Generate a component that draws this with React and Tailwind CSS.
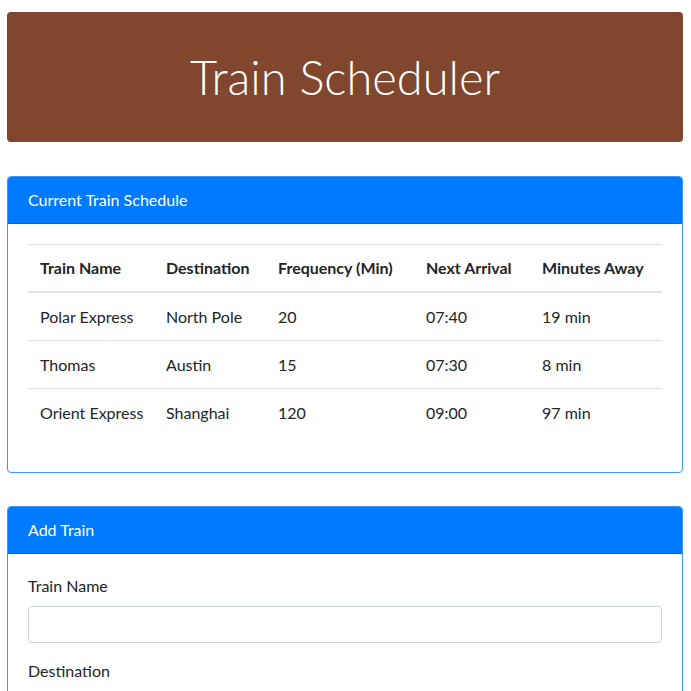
import React from "react";

const trains = [
  { name: "Polar Express", dest: "North Pole", freq: "20", next: "07:40", away: "19 min" },
  { name: "Thomas", dest: "Austin", freq: "15", next: "07:30", away: "8 min" },
  { name: "Orient Express", dest: "Shanghai", freq: "120", next: "09:00", away: "97 min" },
];

const Card = ({ title, children }) => (
  <div className="rounded-[4px] border border-[#3d95ff] bg-white overflow-hidden">
    <div className="bg-[#007bff] text-white px-5 py-3 leading-[22px] border-b border-[#0069d9]">{title}</div>
    <div className="p-5">{children}</div>
  </div>
);

const Field = ({ label }) => (
  <div className="mb-4">
    <label className="block mb-2 leading-6">{label}</label>
    <input
      type="text"
      className="block w-full h-[37px] rounded-[4px] border border-[#ced4da] bg-white px-3 outline-none"
    />
  </div>
);

export default function App() {
  return (
    <div
      className="bg-white text-[#212529] text-[16px] pt-3 pl-[7px] pr-[8px] min-h-screen"
      style={{ fontFamily: 'Lato, "Open Sans", Arial, sans-serif' }}
    >
      <div className="bg-[#80472e] rounded-[4px] py-8 mb-[34px] text-center">
        <h1 className="text-white text-[47px] font-light leading-[66px]">Train Scheduler</h1>
      </div>

      <div className="mb-[33px]">
        <Card title="Current Train Schedule">
          <table className="w-full table-fixed border-collapse mb-4 text-left whitespace-nowrap">
            <thead>
              <tr className="border-t border-[#dee2e6] border-b-2 border-b-[#dee2e6]">
                <th className="w-[126px] px-3 py-3 leading-[22px] font-bold">Train Name</th>
                <th className="w-[112px] px-3 py-3 leading-[22px] font-bold">Destination</th>
                <th className="w-[148px] px-3 py-3 leading-[22px] font-bold">Frequency (Min)</th>
                <th className="w-[116px] px-3 py-3 leading-[22px] font-bold">Next Arrival</th>
                <th className="px-3 py-3 leading-[22px] font-bold">Minutes Away</th>
              </tr>
            </thead>
            <tbody>
              {trains.map((t, i) => (
                <tr key={t.name} className={i > 0 ? "border-t border-[#dee2e6]" : ""}>
                  <td className="px-3 py-3 leading-[23px]">{t.name}</td>
                  <td className="px-3 py-3 leading-[23px]">{t.dest}</td>
                  <td className="px-3 py-3 leading-[23px]">{t.freq}</td>
                  <td className="px-3 py-3 leading-[23px]">{t.next}</td>
                  <td className="px-3 py-3 leading-[23px]">{t.away}</td>
                </tr>
              ))}
            </tbody>
          </table>
        </Card>
      </div>

      <div className="mb-8">
        <Card title="Add Train">
          <Field label="Train Name" />
          <Field label="Destination" />
          <Field label="First Train Time (HH:mm - military time)" />
          <Field label="Frequency (min)" />
          <button className="bg-[#007bff] text-white rounded-[4px] px-3 py-1.5 leading-6">Submit</button>
        </Card>
      </div>
    </div>
  );
}
